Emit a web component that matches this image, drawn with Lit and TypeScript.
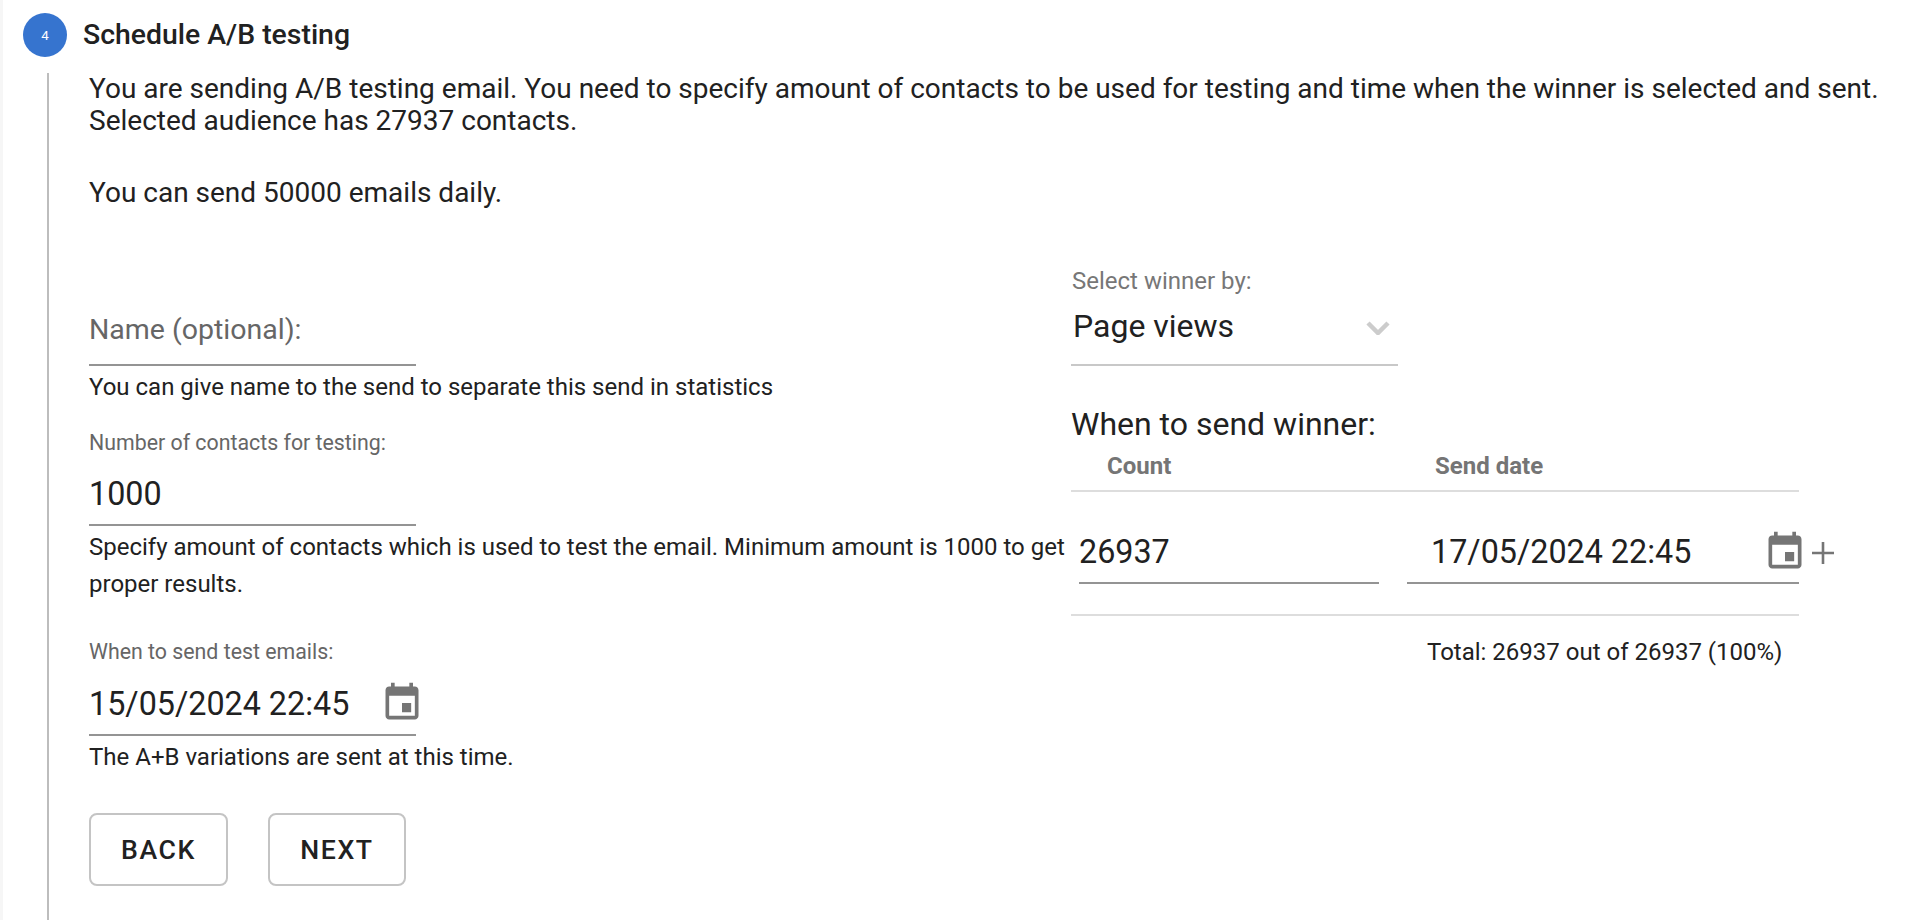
import { LitElement, html, css } from "lit";
import { customElement } from "lit/decorators.js";

const calendar = html`<svg class="cal" viewBox="0 0 24 24"><path d="M17 12h-5v5h5v-5zM16 1v2H8V1H6v2H5c-1.11 0-1.99.9-1.99 2L3 19c0 1.1.89 2 2 2h14c1.1 0 2-.9 2-2V5c0-1.1-.9-2-2-2h-1V1h-2zm3 18H5V8h14v11z"/></svg>`;

@customElement("app-root")
export class AppRoot extends LitElement {
  static styles = css`
    :host {
      display: block;
      width: 1908px;
      height: 920px;
      overflow: hidden;
      background: #fff;
      color: #212121;
      font-family: Roboto, "Liberation Sans", sans-serif;
      box-sizing: border-box;
      border-left: 3px solid #f6f6f6;
    }
    .head { display: flex; align-items: center; height: 70px; padding-left: 20px; }
    .badge {
      width: 44px; height: 44px; border-radius: 50%; background: #3674cf; color: #fff;
      display: flex; align-items: center; justify-content: center; font-size: 13.3px;
    }
    .title { margin-left: 16px; font-size: 28.4px; font-weight: 500; line-height: 36px; }
    .body {
      margin-left: 44px; border-left: 2px solid #bdbdbd; padding-left: 40px; height: 847px;
      margin-top: 3px;
    }
    .intro { font-size: 28px; line-height: 32px; white-space: nowrap; }
    .intro p { margin: 0; }
    .intro p + p { margin-top: 40px; }
    .cols { display: flex; align-items: flex-start; margin-top: 57px; }
    .left { width: 982px; flex: none; }
    .right { width: 728px; flex: none; }
    .field { width: 327px; border-bottom: 2px solid #949494; }
    .plain { font-size: 32.3px; line-height: 38px; padding-top: 1px; }
    .ph { font-size: 28.5px; line-height: 38px; color: #666; margin-top: 45px; padding-bottom: 15px; }
    .cap { font-size: 21.33px; line-height: 26px; color: #666; }
    .cap1 { margin-top: 24px; }
    .cap2 { margin-top: 36px; }
    .hint { font-size: 24px; line-height: 37px; margin-top: 3px; white-space: nowrap; }
    .num { margin-top: 18px; padding-bottom: 11px; }
    .datefield { display: flex; justify-content: space-between; align-items: flex-start; margin-top: 19px; padding-bottom: 11px; }
    .cal { width: 44px; height: 44px; fill: #757575; flex: none; margin: -4px -7.5px -2px 0; }
    .btns { display: flex; gap: 40px; margin-top: 37px; }
    button {
      font: 500 26.67px Roboto, sans-serif; letter-spacing: 1.6px; color: #212121; background: #fff;
      border: 2px solid #c4c4c4; border-radius: 8px; height: 73px; padding: 0; box-sizing: border-box;
    }
    .back { width: 139px; }
    .next { width: 138px; }
    .sel-label { font-size: 24px; line-height: 28px; color: #777; padding: 1px 0 0 1px; }
    .select { width: 327px; border-bottom: 2px solid #c8c8c8; display: flex; justify-content: space-between; align-items: center; margin-top: 11px; padding-bottom: 18px; }
    .select span { font-size: 32px; line-height: 40px; padding-left: 2px; }
    .chev { width: 24px; height: 14px; margin: 4px 8px 0 0; fill: none; stroke: #ccc; stroke-width: 4.5; }
    .when { font-size: 32px; line-height: 40px; margin-top: 38px; }
    .thead { display: flex; border-bottom: 2px solid #ddd; font-size: 24px; font-weight: 700; color: #757575; line-height: 30px; margin-top: 7px; padding-bottom: 9px; }
    .thead span:first-child { margin-left: 36px; width: 328px; }
    .row { display: flex; align-items: flex-start; border-bottom: 2px solid #ddd; height: 124px; box-sizing: border-box; padding-top: 40px; }
    .cnt { margin-left: 8px; width: 300px; border-bottom: 2px solid #949494; padding-bottom: 11px; }
    .dt { margin-left: 28px; width: 392px; border-bottom: 2px solid #949494; padding-bottom: 11px; display: flex; justify-content: space-between; align-items: flex-start; position: relative; }
    .dt span { padding-left: 24px; }
    .dt .cal { margin: -3px -7.5px -3px 0; }
    .plus { position: absolute; right: -36px; top: 9px; width: 24px; height: 24px; stroke: #757575; stroke-width: 2.6; fill: none; }
    .total { font-size: 24px; line-height: 30px; margin: 21px 0 0 356px; }
  `;
  render() {
    return html`
      <div class="head"><div class="badge">4</div><div class="title">Schedule A/B testing</div></div>
      <div class="body">
        <div class="intro">
          <p>You are sending A/B testing email. You need to specify amount of contacts to be used for testing and time when the winner is selected and sent.<br>Selected audience has 27937 contacts.</p>
          <p>You can send 50000 emails daily.</p>
        </div>
        <div class="cols">
          <div class="left">
            <div class="field ph">Name (optional):</div>
            <div class="hint">You can give name to the send to separate this send in statistics</div>
            <div class="cap cap1">Number of contacts for testing:</div>
            <div class="field plain num">1000</div>
            <div class="hint">Specify amount of contacts which is used to test the email. Minimum amount is 1000 to get<br>proper results.</div>
            <div class="cap cap2">When to send test emails:</div>
            <div class="field plain datefield"><span>15/05/2024 22:45</span>${calendar}</div>
            <div class="hint">The A+B variations are sent at this time.</div>
            <div class="btns"><button class="back">BACK</button><button class="next">NEXT</button></div>
          </div>
          <div class="right">
            <div class="sel-label">Select winner by:</div>
            <div class="select"><span>Page views</span><svg class="chev" viewBox="0 0 24 14"><path d="M2 2l10 10L22 2"/></svg></div>
            <div class="when">When to send winner:</div>
            <div class="thead"><span>Count</span><span>Send date</span></div>
            <div class="row">
              <div class="cnt plain">26937</div>
              <div class="dt plain"><span>17/05/2024 22:45</span>${calendar}<svg class="plus" viewBox="0 0 24 24"><path d="M12 1v22M1 12h22"/></svg></div>
            </div>
            <div class="total">Total: 26937 out of 26937 (100%)</div>
          </div>
        </div>
      </div>
    `;
  }
}
